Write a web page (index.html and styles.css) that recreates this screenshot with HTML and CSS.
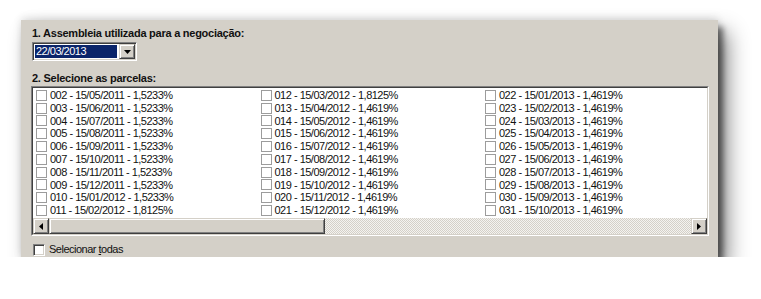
FILE: index.html
```html
<!DOCTYPE html>
<html lang="pt">
<head>
<meta charset="utf-8">
<title>Negociação</title>
<link rel="stylesheet" href="styles.css">
</head>
<body>
<div class="frame">
  <div class="label">1. Assembleia utilizada para a negociação:</div>
  <div class="combo">
    <div class="combo-field"><span class="combo-value">22/03/2013</span></div>
    <div class="btn combo-btn"><svg width="7" height="4" viewBox="0 0 7 4"><path d="M0 0h7L3.5 4z" fill="#000"/></svg></div>
  </div>
  <div class="label label2">2. Selecione as parcelas:</div>
  <div class="listbox">
    <div class="listbox-inner">
      <div class="items">
        <div class="item"><span class="cb"></span>002 - 15/05/2011 - 1,5233%</div>
        <div class="item"><span class="cb"></span>003 - 15/06/2011 - 1,5233%</div>
        <div class="item"><span class="cb"></span>004 - 15/07/2011 - 1,5233%</div>
        <div class="item"><span class="cb"></span>005 - 15/08/2011 - 1,5233%</div>
        <div class="item"><span class="cb"></span>006 - 15/09/2011 - 1,5233%</div>
        <div class="item"><span class="cb"></span>007 - 15/10/2011 - 1,5233%</div>
        <div class="item"><span class="cb"></span>008 - 15/11/2011 - 1,5233%</div>
        <div class="item"><span class="cb"></span>009 - 15/12/2011 - 1,5233%</div>
        <div class="item"><span class="cb"></span>010 - 15/01/2012 - 1,5233%</div>
        <div class="item"><span class="cb"></span>011 - 15/02/2012 - 1,8125%</div>
        <div class="item"><span class="cb"></span>012 - 15/03/2012 - 1,8125%</div>
        <div class="item"><span class="cb"></span>013 - 15/04/2012 - 1,4619%</div>
        <div class="item"><span class="cb"></span>014 - 15/05/2012 - 1,4619%</div>
        <div class="item"><span class="cb"></span>015 - 15/06/2012 - 1,4619%</div>
        <div class="item"><span class="cb"></span>016 - 15/07/2012 - 1,4619%</div>
        <div class="item"><span class="cb"></span>017 - 15/08/2012 - 1,4619%</div>
        <div class="item"><span class="cb"></span>018 - 15/09/2012 - 1,4619%</div>
        <div class="item"><span class="cb"></span>019 - 15/10/2012 - 1,4619%</div>
        <div class="item"><span class="cb"></span>020 - 15/11/2012 - 1,4619%</div>
        <div class="item"><span class="cb"></span>021 - 15/12/2012 - 1,4619%</div>
        <div class="item"><span class="cb"></span>022 - 15/01/2013 - 1,4619%</div>
        <div class="item"><span class="cb"></span>023 - 15/02/2013 - 1,4619%</div>
        <div class="item"><span class="cb"></span>024 - 15/03/2013 - 1,4619%</div>
        <div class="item"><span class="cb"></span>025 - 15/04/2013 - 1,4619%</div>
        <div class="item"><span class="cb"></span>026 - 15/05/2013 - 1,4619%</div>
        <div class="item"><span class="cb"></span>027 - 15/06/2013 - 1,4619%</div>
        <div class="item"><span class="cb"></span>028 - 15/07/2013 - 1,4619%</div>
        <div class="item"><span class="cb"></span>029 - 15/08/2013 - 1,4619%</div>
        <div class="item"><span class="cb"></span>030 - 15/09/2013 - 1,4619%</div>
        <div class="item"><span class="cb"></span>031 - 15/10/2013 - 1,4619%</div>
      </div>
      <div class="hscroll">
        <div class="btn sb-btn"><svg width="4" height="7" viewBox="0 0 4 7"><path d="M4 0v7L0 3.5z" fill="#000"/></svg></div>
        <div class="btn sb-thumb"></div>
        <div class="sb-track"></div>
        <div class="btn sb-btn"><svg width="4" height="7" viewBox="0 0 4 7"><path d="M0 0v7L4 3.5z" fill="#000"/></svg></div>
      </div>
    </div>
  </div>
  <div class="selectall"><span class="cb cb-3d"></span><span class="selectall-text">Selecionar <u>t</u>odas</span></div>
</div>
</body>
</html>
```

FILE: styles.css
```css
* { box-sizing: border-box; }
html, body { margin: 0; padding: 0; background: #fff; }
body {
  font-family: "Liberation Sans", Arial, sans-serif;
  font-size: 11px;
  letter-spacing: -0.5px;
  color: #111;
}
.frame {
  margin: 20px 0 0 21px;
  width: 697px;
  height: 237px;
  background: #d4d0c8;
  padding: 7px 9px 0 10px;
  display: flex;
  flex-direction: column;
  box-shadow: 5px 7px 6px rgba(0,0,0,0.5), 10px 12px 20px rgba(0,0,0,0.45), 0 -2px 8px rgba(0,0,0,0.12);
}
.label {
  font-weight: bold;
  line-height: 13px;
  height: 13px;
  padding-left: 1px;
  letter-spacing: -0.25px;
}
.label2 { margin-top: 11px; }
.combo {
  margin: 2px 0 0 1px;
  width: 105px;
  height: 19px;
  display: flex;
  border: 1px solid;
  border-color: #808080 #fff #fff #808080;
  box-shadow: inset 1px 1px #404040, inset -1px -1px #d4d0c8;
  padding: 2px;
  background: #fff;
}
.combo-field {
  flex: 1;
  padding-right: 2px;
  display: flex;
}
.combo-value {
  flex: 1;
  background: #0a246a;
  color: #fff;
  line-height: 13px;
  padding-left: 1px;
}
.btn {
  background: #d4d0c8;
  border: 1px solid;
  border-color: #d4d0c8 #404040 #404040 #d4d0c8;
  box-shadow: inset 1px 1px #fff, inset -1px -1px #808080;
  display: flex;
  align-items: center;
  justify-content: center;
}
.combo-btn {
  width: 16px;
  margin: -1px -1px -1px 0;
  height: 15px;
}
.listbox {
  margin-top: 1px;
  width: 678px;
  height: 150px;
  border: 1px solid;
  border-color: #808080 #fff #fff #808080;
}
.listbox-inner {
  height: 100%;
  border: 1px solid;
  border-color: #404040 #d4d0c8 #d4d0c8 #404040;
  background: #fff;
  display: flex;
  flex-direction: column;
  overflow: hidden;
}
.items {
  flex: 1;
  display: grid;
  grid-auto-flow: column;
  grid-template-rows: repeat(10, 12.8px);
  grid-template-columns: repeat(3, 224.5px);
  padding: 1px 0 0 3px;
  overflow: hidden;
}
.item {
  display: flex;
  align-items: center;
  white-space: nowrap;
  line-height: 12.8px;
}
.cb {
  width: 11px;
  height: 11px;
  border: 1px solid #9c9c9c;
  background: #fff;
  margin-right: 3px;
  flex: none;
}
.hscroll {
  height: 16px;
  display: flex;
  flex: none;
}
.sb-btn { width: 16px; height: 16px; flex: none; }
.sb-thumb { width: 276px; height: 16px; flex: none; }
.sb-track {
  flex: 1;
  background-color: #fff;
  background-image: repeating-conic-gradient(#d4d0c8 0 25%, #f4f3f0 0 50%);
  background-size: 2px 2px;
}
.selectall {
  margin-top: 7px;
  display: flex;
  align-items: center;
  line-height: 13px;
  padding-left: 2px;
}
.selectall-text { white-space: pre; }
.selectall u { text-decoration: underline; text-underline-offset: 1px; }
.cb-3d {
  width: 12px;
  height: 12px;
  border: 1px solid;
  border-color: #808080 #fff #fff #808080;
  box-shadow: inset 1px 1px #404040, inset -1px -1px #d4d0c8;
  margin-right: 4px;
}
```
